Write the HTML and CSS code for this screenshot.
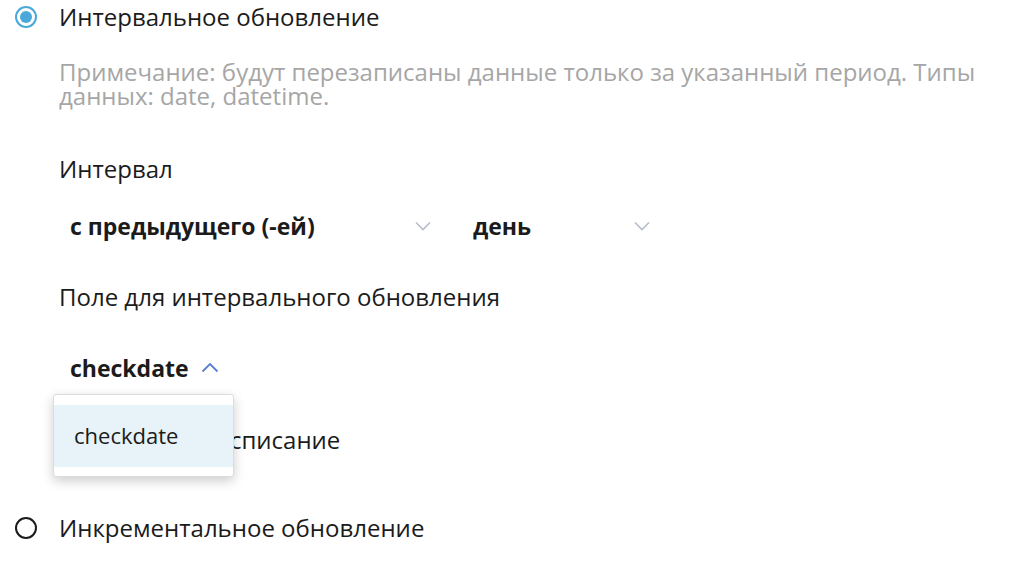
FILE: index.html
```html
<!DOCTYPE html>
<html lang="ru">
<head>
<meta charset="utf-8">
<link rel="stylesheet" href="styles.css">
</head>
<body>
<div class="page">
  <div class="option">
    <span class="radio radio-on"><span class="dot"></span></span>
    <span class="option-label">Интервальное обновление</span>
  </div>
  <div class="details">
    <p class="note">Примечание: будут перезаписаны данные только за указанный период. Типы данных: date, datetime.</p>
    <div class="label label-interval">Интервал</div>
    <div class="selects">
      <div class="select select-wide">
        <span class="value">с предыдущего (-ей)</span>
        <svg class="chev" width="16" height="10" viewBox="0 0 16 10"><path d="M1 1.5 L8 8.5 L15 1.5" fill="none" stroke="#b6bdca" stroke-width="1.6"/></svg>
      </div>
      <div class="select select-narrow">
        <span class="value">день</span>
        <svg class="chev" width="16" height="10" viewBox="0 0 16 10"><path d="M1 1.5 L8 8.5 L15 1.5" fill="none" stroke="#b6bdca" stroke-width="1.6"/></svg>
      </div>
    </div>
    <div class="label label-field">Поле для интервального обновления</div>
    <div class="select-open">
      <div class="select select-auto">
        <span class="value">checkdate</span>
        <svg class="chev-up" width="18" height="11" viewBox="0 0 18 11"><path d="M1.5 9.5 L9 2 L16.5 9.5" fill="none" stroke="#5a7ed6" stroke-width="1.8"/></svg>
      </div>
      <div class="menu">
        <div class="menu-item">checkdate</div>
      </div>
    </div>
    <div class="label label-schedule">Настроить расписание</div>
  </div>
  <div class="option option-bottom">
    <span class="radio radio-off"></span>
    <span class="option-label">Инкрементальное обновление</span>
  </div>
</div>
</body>
</html>
```
FILE: styles.css
```css
* { box-sizing: border-box; }
html, body { margin: 0; padding: 0; background: #fff; }
body {
  font-family: "Open Sans", "Noto Sans", sans-serif;
  color: #1b1b1b;
  font-size: 24px;
}
.page { padding-left: 15px; width: 1026px; height: 574px; overflow: hidden; }

.option { display: flex; align-items: center; height: 34px; gap: 22px; }
.option-label { line-height: 34px; }
.radio {
  width: 22px; height: 22px; border-radius: 50%;
  display: inline-flex; align-items: center; justify-content: center;
  flex: none;
}
.radio-on { border: 2.5px solid #4aa9d9; }
.radio-on .dot { width: 12px; height: 12px; border-radius: 50%; background: #4aa9d9; }
.radio-off { width: 22px; height: 22px; border: 2px solid #1b1b1b; }

.details { padding-left: 44px; }
.note {
  margin: 26px 0 0 0;
  font-size: 24px;
  line-height: 24px;
  color: #a6a6a6;
  width: 940px;
}
.label { line-height: 34px; }
.label-interval { margin-top: 44px; }
.label-field { margin-top: 32px; }
.label-schedule { margin-top: 33px; word-spacing: 13px; }

.selects { display: flex; gap: 23px; margin-top: 18px; }
.select {
  display: flex; align-items: center; justify-content: space-between;
  height: 44px; padding: 0 8px 0 11px;
  font-weight: 700;
  font-size: 23px;
}
.select-wide { width: 380px; }
.select-narrow { width: 196px; }
.select-auto { justify-content: flex-start; gap: 12px; display: inline-flex; }
.chev { display: block; }
.chev-up { display: block; margin-top: -2px; }

.select-open { position: relative; margin-top: 32px; height: 44px; }
.menu {
  position: absolute;
  left: -6px; top: 48px;
  width: 181px;
  padding: 10px 0 9px;
  background: #fff;
  border: 1px solid #dcdcdc;
  border-radius: 3px;
  box-shadow: 0 4px 12px rgba(0,0,0,0.2);
  z-index: 2;
}
.menu-item {
  height: 62px;
  display: flex; align-items: center;
  padding-left: 20px;
  padding-bottom: 2px;
  background: #e7f3f8;
  font-size: 22px;
  color: #1b1b1b;
}
.option-bottom { margin-top: 54px; }
```
